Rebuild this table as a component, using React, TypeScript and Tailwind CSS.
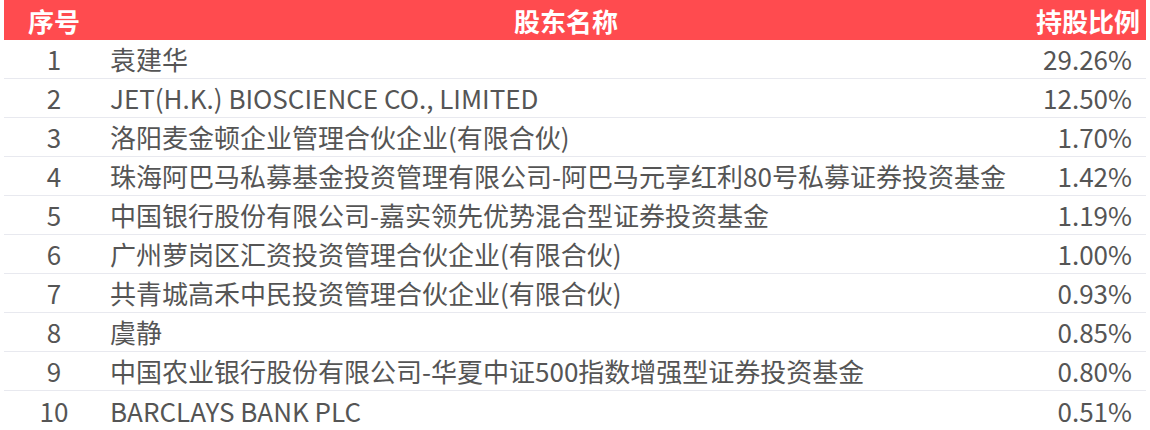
const rows: [string, string][] = [
  ['袁建华', '29.26%'],
  ['JET(H.K.) BIOSCIENCE CO., LIMITED', '12.50%'],
  ['洛阳麦金顿企业管理合伙企业(有限合伙)', '1.70%'],
  ['珠海阿巴马私募基金投资管理有限公司-阿巴马元享红利80号私募证券投资基金', '1.42%'],
  ['中国银行股份有限公司-嘉实领先优势混合型证券投资基金', '1.19%'],
  ['广州萝岗区汇资投资管理合伙企业(有限合伙)', '1.00%'],
  ['共青城高禾中民投资管理合伙企业(有限合伙)', '0.93%'],
  ['虞静', '0.85%'],
  ['中国农业银行股份有限公司-华夏中证500指数增强型证券投资基金', '0.80%'],
  ['BARCLAYS BANK PLC', '0.51%'],
]

export default function App() {
  return (
    <div
      className="w-[1150px] h-[430px] bg-white px-1 overflow-hidden"
      style={{ fontFamily: '"Noto Sans CJK SC", "Noto Sans", sans-serif' }}
    >
      <div className="flex h-[40px] items-center bg-[#ff4b4f] text-[26px] font-bold text-white">
        <div className="w-[100px] text-center">序号</div>
        <div className="w-[924px] text-center">股东名称</div>
        <div className="flex-1 text-right pr-[6px]">持股比例</div>
      </div>
      {rows.map(([name, pct], i) => (
        <div
          key={i}
          className="flex h-[39px] items-center border-b border-[#e8e9ef] last:border-b-0 text-[26px] leading-none text-[#555555]"
        >
          <div className="w-[100px] text-center">{i + 1}</div>
          <div className="w-[924px] pl-[6px] whitespace-nowrap">{name}</div>
          <div className="flex-1 text-right pr-[14px]">{pct}</div>
        </div>
      ))}
    </div>
  )
}
